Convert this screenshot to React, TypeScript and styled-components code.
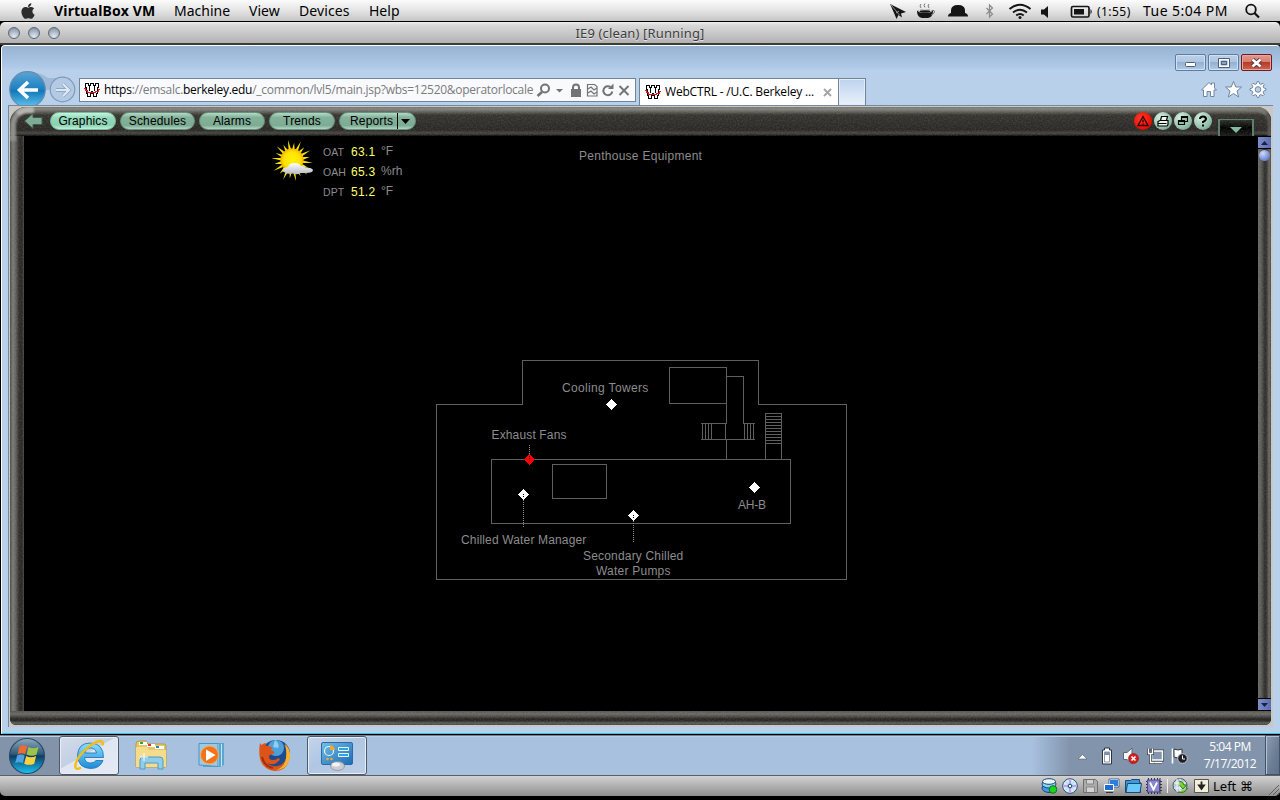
import React from 'react';
import styled, { createGlobalStyle } from 'styled-components';
import { FaApple } from 'react-icons/fa';

const UI = '"Open Sans", "Noto Sans", sans-serif';
const ARIAL = '"Liberation Sans", Arial, sans-serif';

const Global = createGlobalStyle`
  * { box-sizing: border-box; }
  html, body { margin: 0; padding: 0; background: #000; }
  svg { display: block; flex: none; }
`;

const Screen = styled.div`
  width: 1280px;
  height: 800px;
  display: flex;
  flex-direction: column;
  overflow: hidden;
  background: #000;
`;

/* ---------- host menu bar ---------- */
const MenuBar = styled.header`
  height: 22px;
  flex: none;
  display: flex;
  align-items: center;
  padding-left: 19px;
  border-bottom: 1px solid #000;
  background: linear-gradient(#fbfbfb, #e4e4e4 50%, #c6c6c6);
  font: 14px/21px "Noto Sans", sans-serif;
  color: #000;
`;
const MenuSlot = styled.span<{ $w: number; $bold?: boolean; $ls?: number }>`
  width: ${p => p.$w}px;
  flex: none;
  white-space: nowrap;
  font-weight: ${p => (p.$bold ? 700 : 400)};
  letter-spacing: ${p => p.$ls ?? 0}px;
`;
const StatusSlots = styled.div`
  display: flex;
  align-items: center;
  margin-left: auto;
`;
const SmallTime = styled.span`
  font-size: 12px;
  letter-spacing: 0.45px;
`;

/* ---------- VM window title ---------- */
const VmTitle = styled.div`
  height: 23px;
  flex: none;
  display: grid;
  grid-template-columns: 80px 1fr 88px;
  align-items: center;
  padding-left: 8px;
  border-radius: 5px 5px 0 0;
  border-bottom: 2px solid #3c3c3a;
  background: linear-gradient(#f0f0f0, #dadada 3px, #b2b2b2);
`;
const Lights = styled.div`
  display: flex;
  gap: 8px;
`;
const Light = styled.i`
  width: 12px;
  height: 12px;
  border-radius: 50%;
  border: 1.5px solid #5d6773;
  background: radial-gradient(circle at 50% 85%, #e2eaf2, #a9b5c2 55%, #7c8896);
`;
const VmName = styled.div`
  text-align: center;
  font: 13px/20px "Noto Sans", sans-serif;
  letter-spacing: 0.14px;
  color: #3d3d3d;
  text-shadow: 0 1px 0 #e4e4e4;
`;

/* ---------- browser window ---------- */
const Browser = styled.section`
  height: 689px;
  flex: none;
  margin-left: 1px;
  display: flex;
  flex-direction: column;
  border: solid #fff;
  border-width: 1px 0 0 1px;
  border-bottom: 1px solid #35c5dd;
  border-radius: 4px 4px 0 0;
  background: linear-gradient(#97b3d2, #b0cbe8 22px, #b9d0ea 25px, #b9d0ea);
`;
const CaptionRow = styled.div`
  height: 32px;
  flex: none;
  display: flex;
  justify-content: flex-end;
  gap: 2px;
  padding: 8px 8px 0 0;
`;
const CaptionButton = styled.span<{ $close?: boolean }>`
  width: 31px;
  height: 17px;
  display: grid;
  place-items: center;
  border-radius: 2px;
  border: 1px solid ${p => (p.$close ? '#6b1d22' : '#5f7ca0')};
  box-shadow: inset 0 0 0 1px ${p => (p.$close ? '#e9a59b' : '#d2e1f2')};
  background: ${p => (p.$close
    ? 'linear-gradient(#e09a8d, #d57b6c 48%, #b63b27 50%, #cc6450)'
    : 'linear-gradient(#bcd1ea, #adc5e1 48%, #94b1d2 50%, #b1cae6)')};
`;
const NavRow = styled.div`
  height: 27px;
  flex: none;
  display: flex;
  align-items: flex-start;
`;
const BackForward = styled.svg`
  width: 77px;
  height: 35px;
  margin-top: -8px;
`;
const Address = styled.div`
  width: 557px;
  height: 24px;
  margin-right: 3px;
  display: flex;
  align-items: center;
  padding-left: 4px;
  border: 1px solid #71839a;
  background: #f9fafe;
`;
const Url = styled.span`
  width: 432px;
  margin-left: 4px;
  white-space: nowrap;
  font: 12px/20px ${UI};
  letter-spacing: -0.27px;
  color: #7b7b7b;
  b { font-weight: 400; color: #000; }
`;
const Tab = styled.div`
  width: 200px;
  height: 27px;
  display: flex;
  align-items: center;
  padding-left: 5px;
  border: 1px solid #71839a;
  border-bottom: 0;
  background: #fff;
`;
const TabName = styled.span`
  width: 158px;
  margin-left: 4px;
  white-space: nowrap;
  font: 12px/20px ${UI};
  letter-spacing: -0.18px;
  color: #000;
`;
const NewTab = styled.div`
  width: 27px;
  height: 27px;
  border: 1px solid #71839a;
  border-width: 1px 1px 0 0;
  background: linear-gradient(#bdd3ed, #e9f1fb);
  box-shadow: inset 0 0 0 1px #e3edf8;
`;
const Tools = styled.svg`
  margin: 3px 12px 0 auto;
`;

/* ---------- stone frame of the control application ---------- */
const Viewport = styled.div`
  width: 1265px;
  height: 622px;
  flex: none;
  margin-left: 6px;
  padding: 1px 2px 2px 1px;
  border: solid #7488a0;
  border-width: 1px 0 0 1px;
  background: #c9c8c5;
`;
const Frame = styled.div`
  position: relative;
  height: 618px;
  display: grid;
  grid-template: 29px 1fr 14px / 14px 1fr 13px;
  overflow: hidden;
  border-radius: 16px 14px 6px 6px;
  background: #3b3a36;
`;
const Edge = styled.div<{ $side: 'left' | 'right' | 'bottom' }>`
  display: flex;
  flex-direction: column;
  justify-content: space-between;
  ${p => p.$side === 'left' && 'background: linear-gradient(90deg, #4d4d4a, #7b7b77 3px, #5e5e5a 6px, #2e2d2a 9px, #272623 12px, #4b4a46);'}
  ${p => p.$side === 'right' && 'background: linear-gradient(90deg, #6a6a66, #5c5c58 3px, #2b2a28 7px, #3b3a37 9px, #6b6b66 11px, #4b4b48);'}
  ${p => p.$side === 'bottom' && 'grid-column: 1 / -1; background: linear-gradient(#555450, #6b6b66 3px, #454440 6px, #252421 8px, #2d2c29 10px, #5f5e5a 12px, #454441);'}
`;
const AppBar = styled.nav`
  grid-column: 1 / -1;
  display: flex;
  align-items: flex-start;
  gap: 4px;
  padding: 5px 17px 0 14px;
  background: linear-gradient(#74746f, #85857f 2px, #6d6d67 4px, #35342f 8px, #2a2824 23px, #454541 26px, #2a2a27 28px, #000);
`;
const Corner = styled.i<{ $right?: boolean }>`
  position: absolute;
  top: 0;
  ${p => (p.$right ? 'right: 0;' : 'left: 0;')}
  width: 24px;
  height: 34px;
  border: solid transparent;
  border-top-color: ${p => (p.$right ? '#77776f' : '#b4b4b0')};
  ${p => (p.$right
    ? 'border-width: 4px 3px 0 0; border-right-color: #5b5b57; border-top-right-radius: 16px;'
    : 'border-width: 6px 6px 0 0; border-left: 6px solid #8d8d89; border-right: 0; border-top-left-radius: 18px;')}
  filter: blur(1.2px);
`;
const Grain = styled.svg`
  position: absolute;
  inset: 0;
  width: 100%;
  height: 100%;
  opacity: 0.13;
  pointer-events: none;
`;
const BarIcon = styled.svg`
  position: relative;
  z-index: 1;
`;
const Pill = styled.span<{ $w: number; $active?: boolean }>`
  position: relative;
  z-index: 1;
  width: ${p => p.$w}px;
  height: 18px;
  display: flex;
  align-items: center;
  justify-content: center;
  border-radius: 9px;
  border: 1px solid ${p => (p.$active ? '#7fb79e' : '#67917b')};
  background: ${p => (p.$active
    ? 'linear-gradient(#c4f5df, #93dabb 30%, #8ad1b2 75%, #c0f0db)'
    : 'linear-gradient(#b4dac7, #84b19a 28%, #7dab93 78%, #b0d8c4)')};
  font: 12px/16px ${ARIAL};
  letter-spacing: 0.15px;
  color: #000;
`;
const SplitPill = styled(Pill)`
  justify-content: flex-start;
  padding-left: 10px;
`;
const Drop = styled.span`
  display: grid;
  place-items: center;
  width: 18px;
  height: 16px;
  margin-left: auto;
  padding-right: 2px;
  border-left: 1px solid #000;
`;
const RoundIcon = styled.span<{ $alarm?: boolean }>`
  width: 18px;
  height: 18px;
  margin-left: -2px;
  display: grid;
  place-items: center;
  border-radius: 50%;
  background: ${p => (p.$alarm
    ? 'radial-gradient(circle at 40% 35%, #ff3a2c, #ea1308 60%, #b00)'
    : 'radial-gradient(circle at 35% 30%, #d6efe2, #93c0a9 60%, #5b8570)')};
  position: relative;
  z-index: 1;
`;
const Tray = styled.span`
  width: 36px;
  height: 17px;
  margin: 7px 0 0 2px;
  display: grid;
  place-items: center;
  padding-top: 3px;
  border: 2px solid #587d6b;
  border-top-width: 1px;
  border-bottom: 0;
  background: linear-gradient(#2f2f2c, #000 50%, #1c1c1a);
  position: relative;
`;
const Spring = styled.i`
  flex: 1;
`;
const ScrollButton = styled.span`
  height: 13px;
  width: 13px;
  display: grid;
  place-items: center;
  background: linear-gradient(90deg, #7d8fc9, #5a6db4);
  border: solid #000;
  border-width: 1px 0;
  position: relative;
  z-index: 1;
`;
const Thumb = styled.span`
  width: 11px;
  height: 11px;
  margin: 1px 0 auto 1px;
  border-radius: 50%;
  background: radial-gradient(circle at 35% 30%, #cfdbff, #7f95d6 55%, #4d60a4);
  position: relative;
  z-index: 1;
`;

/* ---------- graphic page ---------- */
const Graphic = styled.main`
  position: relative;
  z-index: 1;
  background: #000;
  display: flex;
  flex-direction: column;
  font-family: ${ARIAL};
  color: #8c8c8c;
`;
const PageHead = styled.div`
  height: 70px;
  display: flex;
  align-items: flex-start;
  padding: 4px 0 0 248px;
`;
const Readings = styled.div`
  width: 255px;
  margin: 2px 0 0 9px;
  display: grid;
  grid-template: repeat(3, 20px) / 28px 30px 1fr;
  align-items: center;
`;
const ReadName = styled.span`
  font-size: 10.5px;
  letter-spacing: 0.1px;
`;
const ReadValue = styled.span`
  font-size: 12px;
  letter-spacing: 0.25px;
  color: #ffff6a;
`;
const ReadUnit = styled.span`
  padding-bottom: 2px;
  font-size: 12px;
`;
const PageTitle = styled.h1`
  margin: 8px 0 0 1px;
  font: 400 12px/16px ${ARIAL};
  letter-spacing: 0.27px;
`;
const Plan = styled.svg`
  margin: 144px 0 0 402px;
  text { font-family: ${ARIAL}; font-size: 12px; fill: #8c8c8c; }
`;

/* ---------- guest taskbar ---------- */
const Taskbar = styled.footer`
  height: 42px;
  flex: none;
  display: flex;
  align-items: center;
  border-top: 1px solid #000;
  border-bottom: 1px solid #5a6068;
  background: linear-gradient(90deg, #8293aa 60px, #a8c1df 61px, #a8c1df 1032px, #8294ab 1070px);
  box-shadow: inset 0 1px 0 #6d7f95, inset 0 2px 0 #b9cfe6;
`;
const TaskSlot = styled.span<{ $w: number; $on?: 'bright' | 'plain' }>`
  width: ${p => p.$w}px;
  height: 39px;
  display: grid;
  place-items: center;
  border-radius: 3px;
  border: 1px solid ${p => (p.$on ? '#4c5a6c' : 'transparent')};
  ${p => p.$on && 'box-shadow: inset 0 0 0 1px #e6eef8;'}
  ${p => p.$on === 'bright' && 'background: linear-gradient(150deg, #d3dceb, #c3cfe3 45%, #dfe6f2 46%, #e5ebf5);'}
  ${p => p.$on === 'plain' && 'background: linear-gradient(150deg, #c4d5eb, #b0c6e2 45%, #bccfe8);'}
`;
const TrayIcons = styled.svg`
  margin-left: auto;
`;
const Clock = styled.div`
  width: 70px;
  text-align: center;
  font: 12px/17px ${UI};
  letter-spacing: -0.5px;
  color: #fff;
`;
const ShowDesktop = styled.span`
  width: 15px;
  height: 40px;
  border: 1px solid #41526a;
  box-shadow: inset 1px 1px 0 #b3c2d4;
  background: linear-gradient(110deg, #8c9cb2, #6b7d95 60%, #5f728b);
`;

/* ---------- VM status bar ---------- */
const VmStatus = styled.div`
  height: 20px;
  flex: none;
  display: flex;
  align-items: center;
  justify-content: flex-end;
  border-radius: 0 0 5px 5px;
  background: linear-gradient(#d2d2d2, #8f8f8f);
`;
const HostKey = styled.span`
  width: 47px;
  margin-left: 2px;
  white-space: nowrap;
  font: 13px/20px "Noto Sans", "DejaVu Sans", sans-serif;
  color: #000;
`;

const Favicon = () => (
  <svg width="16" height="16" viewBox="0 0 16 16" shapeRendering="crispEdges">
    <path d="M1.500 1.500H4.500V3.500H6.500V1.500H9.500V3.500H11.500V1.500H14.500V5.500H13.500V11.500H12.500V14.500H9.500V11.500H8.500V9.500H7.500V11.500H6.500V14.500H3.500V11.500H2.500V5.500H1.500z" fill="#fff" stroke="#000" />
    <path d="M5.500 4V9M10.500 4V9" stroke="#000" />
    <path d="M0 6.500h1v2h2v1.500h8v-1h3v-1.500h2" fill="none" stroke="#e8151b" strokeWidth="1" />
  </svg>
);

const StatusIcons = () => (
  <svg width="208" height="20" viewBox="889 0 208 20">
    <g fill="#151515">
      <path d="M890 3l16 8-5 1.500 1 4-3.500-2.500-2 4-2.500-6z" />
      <path d="M891 4l8.500 10M896 12l3-2" stroke="#ddd" strokeWidth=".6" />
      <path d="M917 10q8-4 16 0 0 6-5 7h-6q-5-1-5-7z" />
      <ellipse cx="925" cy="10" rx="7" ry="2" fill="#ddd" />
      <ellipse cx="925" cy="10.500" rx="5.500" ry="1.300" />
      <path d="M932 9.500q3-.5 2.500 1.500t-3.500 3M921 7q-2-2 0-4M925 6.500q-2-2 0-4M929 7q-2-2 0-4" fill="none" stroke="#777" />
      <path d="M951 12V9.500Q951 4 958 4T965 9.500V12Q968 12.500 968 15.500H948Q948 12.500 951 12z" />
      <path d="M986.500 7l6 6-3 3V4l3 3-6 6" fill="none" stroke="#8a8a8a" strokeWidth="1.200" />
      <g fill="none" stroke="#151515" strokeWidth="2">
        <path d="M1009.500 8q10.500-8.500 21 0M1013 11.500q7-5.500 14 0M1016.300 14.500q3.700-3 7.400 0" />
      </g>
      <circle cx="1020" cy="16.500" r="1.500" />
      <path d="M1041 8.500h3l4-3.500v12l-4-3.500h-3z" />
      <rect x="1071.500" y="5.500" width="17.500" height="10.500" rx="1.500" fill="none" stroke="#151515" strokeWidth="1.700" />
      <rect x="1074" y="8" width="10" height="5.500" />
      <path d="M1090.500 8q2.500 2.500 0 5.500z" />
    </g>
  </svg>
);

const Weather = () => (
  <svg width="42" height="42" viewBox="0 0 42 42">
    <defs>
      <radialGradient id="sun"><stop offset="0" stopColor="#fff200" /><stop offset=".7" stopColor="#ffe400" /><stop offset="1" stopColor="#ffae00" /></radialGradient>
      <linearGradient id="cloud" x2="0" y2="1"><stop offset="0" stopColor="#fff" /><stop offset="1" stopColor="#b9bcc4" /></linearGradient>
    </defs>
    <g fill="#f4e400">
      {Array.from({ length: 20 }, (_, i) => {
        const a = (i * Math.PI) / 10 + 0.12;
        const r = i % 2 ? 18 : 21;
        const pt = (rad: number, ang: number) => `${(20 + rad * Math.cos(ang)).toFixed(2)},${(20.5 + rad * Math.sin(ang)).toFixed(2)}`;
        return <polygon key={i} points={`${pt(11, a - 0.12)} ${pt(r, a)} ${pt(11, a + 0.12)}`} />;
      })}
    </g>
    <circle cx="20" cy="20" r="11.500" fill="url(#sun)" />
    <path d="M11 30q0-2.500 5-3 1-4 6.500-4 5 0 6.500 3 3-.5 5 1.500 6 0 7 2.500 0 3-7 3h-5q-3 2-8 .5-6 1-8-1-3-1-2-2.500z" fill="url(#cloud)" />
  </svg>
);

const Marker = ({ x, y, red, stem }: { x: number; y: number; red?: boolean; stem?: 'up' | 'down' }) => (
  <g>
    <path d={`M${x + 0.5} ${y - 5}l5.500 5.500-5.500 5.500-5.500-5.500z`} fill={red ? '#f00' : '#fff'} shapeRendering="crispEdges" />
    {stem && <path d={`M${x + 0.5} ${stem === 'up' ? y - 3 : y}v4`} stroke="#000" strokeDasharray="1 1" />}
  </g>
);

const PlanLabel = ({ x, y, w, children }: { x: number; y: number; w: number; children: string }) => (
  <text x={x} y={y} textLength={w}>{children}</text>
);

const FloorPlan = () => (
  <Plan width="431" height="240" viewBox="426 350 431 240">
    <g fill="none" stroke="#5f5f5f" shapeRendering="crispEdges">
      <path d="M436.500 579.500V404.500H522.500V360.500H758.500V404.500H846.500V579.500z" />
      <path d="M491.500 459.500H790.500V523.500H491.500z" />
      <path d="M552.500 464.500H606.500V498.500H552.500z" />
      <path d="M726.500 423V367.500H669.500V403.500H726.500M726.500 376.500H743.500V423.500H755M701 423.500H726.500M701 439.500H755M725.500 423V439M726.500 439V459" />
      <path d="M702.500 423V439M705.500 423V439M708.500 423V439M711.500 423V439M744.500 423V439M747.500 423V439M750.500 423V439M753.500 423V439" />
      <path d="M765.500 459V413.500H781.500V459" />
      {Array.from({ length: 10 }, (_, i) => (
        <path key={i} d={`M765 ${416.5 + i * 3}H782`} />
      ))}
      <path d="M529.500 445V456M523.500 500V527M633.500 521V542" strokeDasharray="1 1" stroke="#8a8a8a" />
    </g>
    <Marker x={611} y={404} />
    <Marker x={529} y={459} red stem="up" />
    <Marker x={523} y={494} stem="down" />
    <Marker x={633} y={515} stem="down" />
    <Marker x={754} y={487} />
    <PlanLabel x={562} y={392} w={86.300}>Cooling Towers</PlanLabel>
    <PlanLabel x={491.500} y={439} w={75}>Exhaust Fans</PlanLabel>
    <PlanLabel x={461} y={544} w={125.300}>Chilled Water Manager</PlanLabel>
    <PlanLabel x={583} y={560} w={100.300}>Secondary Chilled</PlanLabel>
    <PlanLabel x={596} y={575} w={74.500}>Water Pumps</PlanLabel>
    <PlanLabel x={738} y={509} w={28}>AH-B</PlanLabel>
  </Plan>
);

const StartOrb = () => (
  <svg width="38" height="38" viewBox="0 0 38 38">
    <defs>
      <linearGradient id="orb" x2="0" y2="1"><stop offset="0" stopColor="#8fa9bd" /><stop offset=".45" stopColor="#2f5876" /><stop offset=".5" stopColor="#0b3c63" /><stop offset="1" stopColor="#1cc4f4" /></linearGradient>
    </defs>
    <circle cx="19" cy="19" r="17.500" fill="url(#orb)" stroke="#274a66" strokeWidth="1.200" />
    <g transform="translate(1.500 .5) scale(.95)">
      <path d="M10.500 9.500Q14 7 18.500 9.500L16.500 17.500Q12.500 15.500 8.500 17.500z" fill="#ee6a33" />
      <path d="M20 10Q25 12.500 30.500 10L28.500 18Q23.500 20.500 18 18z" fill="#9cc44b" />
      <path d="M8 19Q12 17 16 19L14 27Q10 25 6 27z" fill="#4ea3e0" />
      <path d="M17.500 19.500Q22.500 22 28 19.500L26 27.500Q20.500 30 15.500 27.500z" fill="#fbd040" />
    </g>
  </svg>
);
const IeLogo = () => (
  <svg width="32" height="32" viewBox="0 0 32 32">
    <defs><linearGradient id="ie" x2="0" y2="1"><stop offset="0" stopColor="#8de0fb" /><stop offset="1" stopColor="#1b8bd8" /></linearGradient></defs>
    <path d="M30.500 18.500H11.500Q12 24 17.500 24 21.500 24 23 21.500H30Q27 29.500 17.500 29.500 5 29 4.500 16.500 5 4 17.500 4 30.500 4.500 30.500 18.500zM11.800 14H23.500Q22.500 9 17.600 9T11.800 14z" fill="url(#ie)" stroke="#2579b9" strokeWidth=".9" />
    <path d="M8 28.500Q3 31.500 2.300 28 2 21 11.500 11.500 21 2.500 27.500 2 30.500 2.200 29.500 6.500" fill="none" stroke="#f4bd14" strokeWidth="2.400" />
  </svg>
);
const ExplorerLogo = () => (
  <svg width="34" height="32" viewBox="0 0 34 32">
    <path d="M2 5q0-3 3-3h7l2 3h16q2 0 2 2v21H2z" fill="#e6c765" stroke="#b99b45" />
    <path d="M5 3h8v3H5zM13 5h8v3h-8zM21 7h9v3h-9z" fill="#fff" />
    <path d="M6 3h3v2H6z" fill="#2ba836" /><path d="M14 5h3v2h-3z" fill="#d33b2c" /><path d="M22 7h3v2h-3z" fill="#2b79d1" />
    <path d="M2 8h11l2 3h17v17H2z" fill="#f3dd8c" />
    <path d="M6 30V21q0-3 3-3h17q3 0 3 3v9h-5v-6H11v6z" fill="#8fcdea" stroke="#4d9cc6" />
    <path d="M10 14v8M6 18h8" stroke="#fff" />
  </svg>
);
const PlayerLogo = () => (
  <svg width="32" height="30" viewBox="0 0 32 30">
    <path d="M6 3h21v22l-4 2H6z" fill="#5aa6cf" /><path d="M24.500 4v22M21.500 4v22" stroke="#c8e6f4" />
    <path d="M2 3.500h19v23L2 25z" fill="#9acbe6" stroke="#4b95bf" />
    <circle cx="12.500" cy="15" r="9" fill="#f37418" stroke="#f9ab6b" />
    <path d="M9 9.500l9.500 5.500L9 21z" fill="#fff" />
  </svg>
);
const FirefoxLogo = () => (
  <svg width="34" height="34" viewBox="0 0 34 34">
    <circle cx="18" cy="16" r="14" fill="#1c4c8f" />
    <circle cx="18" cy="10" r="8" fill="#4f9fd8" />
    <path d="M17 2q5 4 3 8l-5-1z" fill="#8fd0f2" />
    <path d="M2 5l1.500 2q2-2 5-2l-1 3q3-1 7 2l-2 2q4 1 4 3-3 2-5 2-2 5 4 5 3 0 5-2 3 1-1 4-4 4-10 1 4 4 10 3 9-2 9-12 0-6-3-10 6 4 6 12-1 15-15 15Q3 31 1.500 18 1 9 2 5z" fill="#dd5416" />
    <path d="M27 6q6 5 5 14-3 12-14 12 9-3 10-12 1-8-1-14z" fill="#f6b22c" />
    <path d="M4 19q2 9 11 11" stroke="#a52c10" strokeWidth="2" fill="none" />
  </svg>
);
const PanelLogo = () => (
  <svg width="34" height="32" viewBox="0 0 34 32">
    <defs><linearGradient id="panel" x2="1" y2="1"><stop offset="0" stopColor="#72bde8" /><stop offset="1" stopColor="#1c6cb4" /></linearGradient></defs>
    <rect x="1.500" y="3.500" width="31" height="22" rx="1.500" fill="url(#panel)" stroke="#2a6ca3" />
    <circle cx="9" cy="12" r="4.500" fill="none" stroke="#e6f6ff" strokeWidth="1.200" />
    <path d="M10 11V6q4.500 1 5 5z" fill="#f9a62a" />
    <path d="M18.500 8.500h10v3h-10zM18.500 14.500h10v3h-10z" fill="#33a0e2" stroke="#e4f5ff" />
    <circle cx="7.500" cy="20" r="1.300" fill="#f9a62a" /><circle cx="11.500" cy="20" r="1.300" fill="#f9a62a" />
    <ellipse cx="17.500" cy="27" rx="7" ry="4.500" fill="#c9ccd0" stroke="#85898e" strokeWidth=".7" />
    <ellipse cx="16" cy="25.500" rx="4" ry="2" fill="#f2f3f4" />
  </svg>
);

const GuestTray = () => (
  <TrayIcons width="112" height="24" viewBox="1077 743.500 112 24">
    <path d="M1078 759.500l4.500-4.500 4.500 4.500z" fill="#fff" stroke="#4f5d70" strokeWidth=".6" />
    <g stroke="#2d343e" strokeWidth="1">
      <path d="M1102.500 750.500h2v-2h5v2h2v14h-9z" fill="#fff" />
      <path d="M1105 752.500h4v3h-4z" fill="#7c8da4" stroke="none" />
      <path d="M1104.500 752.500h5v10h-5z" fill="none" stroke="#8a97a8" />
      <path d="M1123.500 753h3.500l5-4.500v16l-5-4.500h-3.500z" fill="#f4f6f8" stroke="#5b6777" />
      <circle cx="1133.500" cy="759" r="4.800" fill="#d8231e" stroke="#a51512" />
      <path d="M1131.500 757l4 4m0-4l-4 4" stroke="#fff" strokeWidth="1.600" />
      <path d="M1151.500 751.500h11v9h-11zM1154 763h8" fill="#8495ab" stroke="#39434f" strokeWidth="3" />
      <path d="M1151.500 751.500h11v9h-11zM1154 763h8" fill="#8495ab" stroke="#fff" strokeWidth="1.500" />
      <path d="M1148.500 749v5h4v-5M1150.500 754v9h4" fill="none" stroke="#39434f" strokeWidth="2.800" />
      <path d="M1148.500 749v5h4v-5M1150.500 754v9h4" fill="none" stroke="#fff" strokeWidth="1.300" />
      <path d="M1172.500 749v15" stroke="#fff" strokeWidth="1.600" />
      <path d="M1174 749.500q4 2 8 0v8q-4 2-8 0z" fill="#fff" />
      <circle cx="1182.500" cy="759" r="4.800" fill="#1c1f24" stroke="#c3c8cf" />
      <path d="M1182.500 756v3.500h2.500" stroke="#fff" fill="none" />
    </g>
  </TrayIcons>
);

const VmDevices = () => (
  <svg width="170" height="20" viewBox="1041 776 170 20">
    <g stroke="#1a4774">
      <ellipse cx="1049" cy="788" rx="7" ry="4.500" fill="#3e9be4" />
      <ellipse cx="1049" cy="784" rx="7" ry="4" fill="#8fd0f6" />
      <ellipse cx="1049" cy="781.500" rx="6.500" ry="2.800" fill="#e9f6fd" />
      <circle cx="1053" cy="789.500" r="3.800" fill="#1fd320" stroke="#0a7a12" />
      <circle cx="1070" cy="786" r="7.300" fill="#e7eefa" stroke="#2b4d86" />
      <path d="M1070 779.500v13M1063.500 786h13" stroke="#b5a7ea" strokeWidth="2.500" />
      <path d="M1065.500 781.500l9 9m0-9l-9 9" stroke="#a4e8e4" strokeWidth="1.500" />
      <circle cx="1070" cy="786" r="1.800" fill="#fff" />
      <path d="M1083.500 779.500h12l2 2v11h-14z" fill="#ababab" stroke="#6f6f6f" />
      <path d="M1086.500 780v4h7v-4M1086.500 792v-5h8v5" fill="#d3d3d3" stroke="#868686" />
      <path d="M1109.500 779.500h9v7h-9z" fill="#2c7fdd" stroke="#fff" />
      <path d="M1109 779h10v8h-10z" fill="none" stroke="#1b3f73" strokeWidth=".7" />
      <path d="M1104.500 784.500h9v6h-9z" fill="#1d6fd6" stroke="#fff" />
      <path d="M1106 792.500h7" stroke="#333" />
      <path d="M1125.500 780.500h5l1-1h8v3h1v10h-15z" fill="#3c9ade" />
      <path d="M1127.500 783.500h14l-1.500 9h-14z" fill="#6cc6f6" />
      <path d="M1148.500 778v16M1151.500 778v16M1154.500 778v16M1157.500 778v16M1160 778v16M1146 781.500h16M1146 784.500h16M1146 787.500h16M1146 790.500h16" stroke="#334" />
      <rect x="1147.500" y="780" width="12" height="12" fill="#8c88cf" stroke="#4a478a" />
      <path d="M1150 782.500l3.500 7 3.500-7" fill="none" stroke="#fff" strokeWidth="1.800" />
      <path d="M1167.500 779v14" stroke="#efefef" />
      <circle cx="1180" cy="785.500" r="7" fill="#b9c9d8" stroke="#44566a" />
      <path d="M1177 779v13M1180 778.500v14M1174 783h12M1174 788h10" stroke="#f3f7fa" />
      <path d="M1179 781q5 1 5 4h2.500l-3.500 4-3.500-4M1188 788q-4 6-9 4" fill="#7fd432" stroke="#2b7d12" />
      <path d="M1194.500 779.500h14v13h-14z" fill="#f4eedb" stroke="#555" />
      <path d="M1201.500 781.500v4M1199 785.500h5l-2.500 3.500z" fill="#222" stroke="#222" strokeWidth="1.800" />
    </g>
  </svg>
);

const App: React.FC = () => (
  <Screen>
    <Global />
    <MenuBar>
      <MenuSlot $w={35}><FaApple size={18} color="#2d2d2d" /></MenuSlot>
      <MenuSlot $w={120} $bold $ls={0.18}>VirtualBox VM</MenuSlot>
      <MenuSlot $w={75}>Machine</MenuSlot>
      <MenuSlot $w={50}>View</MenuSlot>
      <MenuSlot $w={70} $ls={0.1}>Devices</MenuSlot>
      <MenuSlot $w={40}>Help</MenuSlot>
      <StatusSlots>
        <StatusIcons />
        <MenuSlot $w={46}><SmallTime>(1:55)</SmallTime></MenuSlot>
        <MenuSlot $w={102} $ls={0.45}>Tue 5:04 PM</MenuSlot>
        <svg width="35" height="18" viewBox="0 0 35 18">
          <circle cx="6" cy="7.500" r="4.800" fill="none" stroke="#111" strokeWidth="1.800" />
          <path d="M9.500 11l4.500 4.500" stroke="#111" strokeWidth="2.200" />
        </svg>
      </StatusSlots>
    </MenuBar>

    <VmTitle>
      <Lights><Light /><Light /><Light /></Lights>
      <VmName>IE9 (clean) [Running]</VmName>
    </VmTitle>

    <Browser>
      <CaptionRow>
        <CaptionButton><svg width="13" height="9"><rect x="1.500" y="4.500" width="10" height="4" rx="1" fill="#fff" stroke="#4e5e76" /></svg></CaptionButton>
        <CaptionButton><svg width="12" height="10"><rect x="1.500" y="1.500" width="9" height="7" fill="#8aa7cb" stroke="#fff" strokeWidth="2" /><path d="M.5.500h11v9H.5zM3.500 3.500h5v3h-5z" fill="none" stroke="#4e5e76" /></svg></CaptionButton>
        <CaptionButton $close><svg width="13" height="10"><path d="M2.500 1.500l8 7m0-7l-8 7" stroke="#5c3540" strokeWidth="4.500" /><path d="M2.500 1.500l8 7m0-7l-8 7" stroke="#fff" strokeWidth="2.600" /></svg></CaptionButton>
      </CaptionRow>
      <NavRow>
        <BackForward viewBox="2 70 77 35">
          <defs>
            <linearGradient id="back" x2="0" y2="1"><stop offset="0" stopColor="#5aa5d6" /><stop offset=".5" stopColor="#1a80c0" /><stop offset=".52" stopColor="#0e76b8" /><stop offset="1" stopColor="#62c4ef" /></linearGradient>
          </defs>
          <path d="M30 72q12 1 18 6 8 0 15 0v12H30z" fill="#9fb9d8" />
          <circle cx="27.500" cy="89.500" r="17.800" fill="url(#back)" stroke="#6c8aa9" strokeWidth="1.200" />
          <path d="M38 90H20M28 82l-8.500 8 8.500 8" fill="none" stroke="#fff" strokeWidth="3.600" />
          <circle cx="62.500" cy="89.500" r="12.300" fill="#b4cae4" stroke="#8099b7" strokeWidth="1.200" />
          <path d="M56 90h12M63 84l6 6-6 6" fill="none" stroke="#8ea7c5" strokeWidth="3.800" />
          <path d="M56 90h12M63 84l6 6-6 6" fill="none" stroke="#dce8f5" strokeWidth="2.200" />
        </BackForward>
        <Address>
          <Favicon />
          <Url><b>https</b>://emsalc.<b>berkeley.edu</b>/_common/lvl5/main.jsp?wbs=12520&amp;operatorlocale</Url>
          <svg width="96" height="18" viewBox="536 81 96 18" fill="none" stroke="#747474" strokeWidth="2">
            <circle cx="545" cy="88.500" r="4" /><path d="M542 92l-4.500 4" strokeWidth="2.600" />
            <path d="M556 89h7l-3.500 3.500z" fill="#747474" stroke="none" />
            <path d="M571 89h10v8h-10z" fill="#747474" stroke="none" /><path d="M573 89v-1.500q0-3 3-3t3 3V89" />
            <path d="M587.500 84.500h7l2.500 2v9.500h-9.500z" strokeWidth="1.200" /><path d="M588 89l3-2 3 3 3-2M588 93l3-2 3 3 3-2" strokeWidth="1.300" />
            <path d="M610.500 87A4.500 4.500 0 1 0 612.300 91.500" /><path d="M608 89h5.500v-5.500z" fill="#747474" stroke="none" />
            <path d="M619.500 86l9 9m0-9l-9 9" />
          </svg>
        </Address>
        <Tab>
          <Favicon />
          <TabName>WebCTRL - /U.C. Berkeley ...</TabName>
          <svg width="9" height="9"><path d="M1 1l7 7m0-7L1 8" stroke="#a5a5a5" strokeWidth="2" /></svg>
        </Tab>
        <NewTab />
        <Tools width="68" height="18" viewBox="1200 81 68 18" fill="#fff" stroke="#7085a0">
          <path d="M1201.500 90l7.500-7.500 2.500 2.500v-2h3v5l2 2h-2.500v6.500h-3.500v-5h-3.500v5h-3.500V90z" />
          <path d="M1233.500 81.500l2.300 5.500h5.700l-4.500 4 1.700 6-5.200-3.500-5.200 3.500 1.700-6-4.500-4h5.700z" />
          <g transform="translate(1258 89.500)">
            <path d={Array.from({ length: 32 }, (_, i) => {
              const r = i % 4 < 2 ? 8 : 5.8;
              const a = (i * Math.PI) / 16 - 0.1;
              return `${i ? 'L' : 'M'}${(r * Math.cos(a)).toFixed(2)} ${(r * Math.sin(a)).toFixed(2)}`;
            }).join('') + 'z'} />
            <circle r="2.800" fill="#b9d0ea" />
          </g>
        </Tools>
      </NavRow>

      <Viewport>
        <Frame>
          <AppBar>
            <BarIcon width="22" height="18" viewBox="0 0 22 18"><path d="M.5 9L9 1.500V5.500h9v7H9v4z" fill="#7fab94" stroke="#3f5b4c" /></BarIcon>
            <Pill $w={66} $active>Graphics</Pill>
            <Pill $w={75}>Schedules</Pill>
            <Pill $w={66}>Alarms</Pill>
            <Pill $w={66}>Trends</Pill>
            <SplitPill $w={77}>Reports<Drop><svg width="9" height="5"><path d="M0 0h9L4.500 5z" /></svg></Drop></SplitPill>
            <Spring />
            <RoundIcon $alarm><svg width="12" height="12" fill="none" stroke="#300"><path d="M1 10.500L6 1.500l5 9zM6 4.500v3M6 8.500v1" strokeWidth="1.300" /></svg></RoundIcon>
            <RoundIcon><svg width="12" height="12" fill="#e8f4ee" stroke="#000"><path d="M3.500 5.500l1-4h6l-1 4zM1 6.500l2-1h8v4l-1 1.500H1zM1 8.500h8.500" strokeWidth="1.200" /></svg></RoundIcon>
            <RoundIcon><svg width="12" height="12" fill="#93c0a9" stroke="#000"><path d="M4.500 1.500h6v5h-6zM4 2.500h7M1.500 5.500h6v4h-6zM1 6.500h7" strokeWidth="1.200" /></svg></RoundIcon>
            <RoundIcon><svg width="12" height="12" fill="none" stroke="#000" strokeWidth="2"><path d="M3 4q0-2.500 3-2.500T9 4q0 1.500-3 3v1M6 9.500v2" /></svg></RoundIcon>
            <Tray><svg width="12" height="6"><path d="M0 0h12L6 6z" fill="#84b89c" /></svg></Tray>
          </AppBar>
          <Edge $side="left" />
          <Graphic>
            <PageHead>
              <Weather />
              <Readings>
                <ReadName>OAT</ReadName><ReadValue>63.1</ReadValue><ReadUnit>°F</ReadUnit>
                <ReadName>OAH</ReadName><ReadValue>65.3</ReadValue><ReadUnit>%rh</ReadUnit>
                <ReadName>DPT</ReadName><ReadValue>51.2</ReadValue><ReadUnit>°F</ReadUnit>
              </Readings>
              <PageTitle>Penthouse Equipment</PageTitle>
            </PageHead>
            <FloorPlan />
          </Graphic>
          <Edge $side="right">
            <ScrollButton><svg width="7" height="4"><path d="M0 4h7L3.500 0z" fill="#1b2238" /></svg></ScrollButton>
            <Thumb />
            <ScrollButton><svg width="7" height="4"><path d="M0 0h7L3.500 4z" fill="#1b2238" /></svg></ScrollButton>
          </Edge>
          <Edge $side="bottom" />
          <Corner />
          <Corner $right />
          <Grain>
            <filter id="grain" x="0" y="0" width="1" height="1"><feTurbulence type="fractalNoise" baseFrequency="0.6" numOctaves="2" /><feColorMatrix type="matrix" values="0 0 0 0 .6  0 0 0 0 .6  0 0 0 0 .56  2 0 0 0 -.7" /></filter>
            <rect width="1261" height="29" filter="url(#grain)" />
            <rect y="29" width="14" height="575" filter="url(#grain)" />
            <rect x="1248" y="29" width="13" height="575" filter="url(#grain)" />
            <rect y="604" width="1261" height="14" filter="url(#grain)" />
          </Grain>
        </Frame>
      </Viewport>
    </Browser>

    <Taskbar>
      <TaskSlot $w={54}><StartOrb /></TaskSlot>
      <TaskSlot $w={5} />
      <TaskSlot $w={60} $on="bright"><IeLogo /></TaskSlot>
      <TaskSlot $w={64}><ExplorerLogo /></TaskSlot>
      <TaskSlot $w={60}><PlayerLogo /></TaskSlot>
      <TaskSlot $w={64}><FirefoxLogo /></TaskSlot>
      <TaskSlot $w={60} $on="plain"><PanelLogo /></TaskSlot>
      <GuestTray />
      <TaskSlot $w={6} />
      <Clock>5:04 PM<br />7/17/2012</Clock>
      <ShowDesktop />
    </Taskbar>

    <VmStatus>
      <VmDevices />
      <HostKey>Left ⌘</HostKey>
      <svg width="20" height="20"><path d="M9 19L19 9M13 19l6-6M17 19l2-2" stroke="#5f5f5f" /></svg>
    </VmStatus>
  </Screen>
);

export default App;
